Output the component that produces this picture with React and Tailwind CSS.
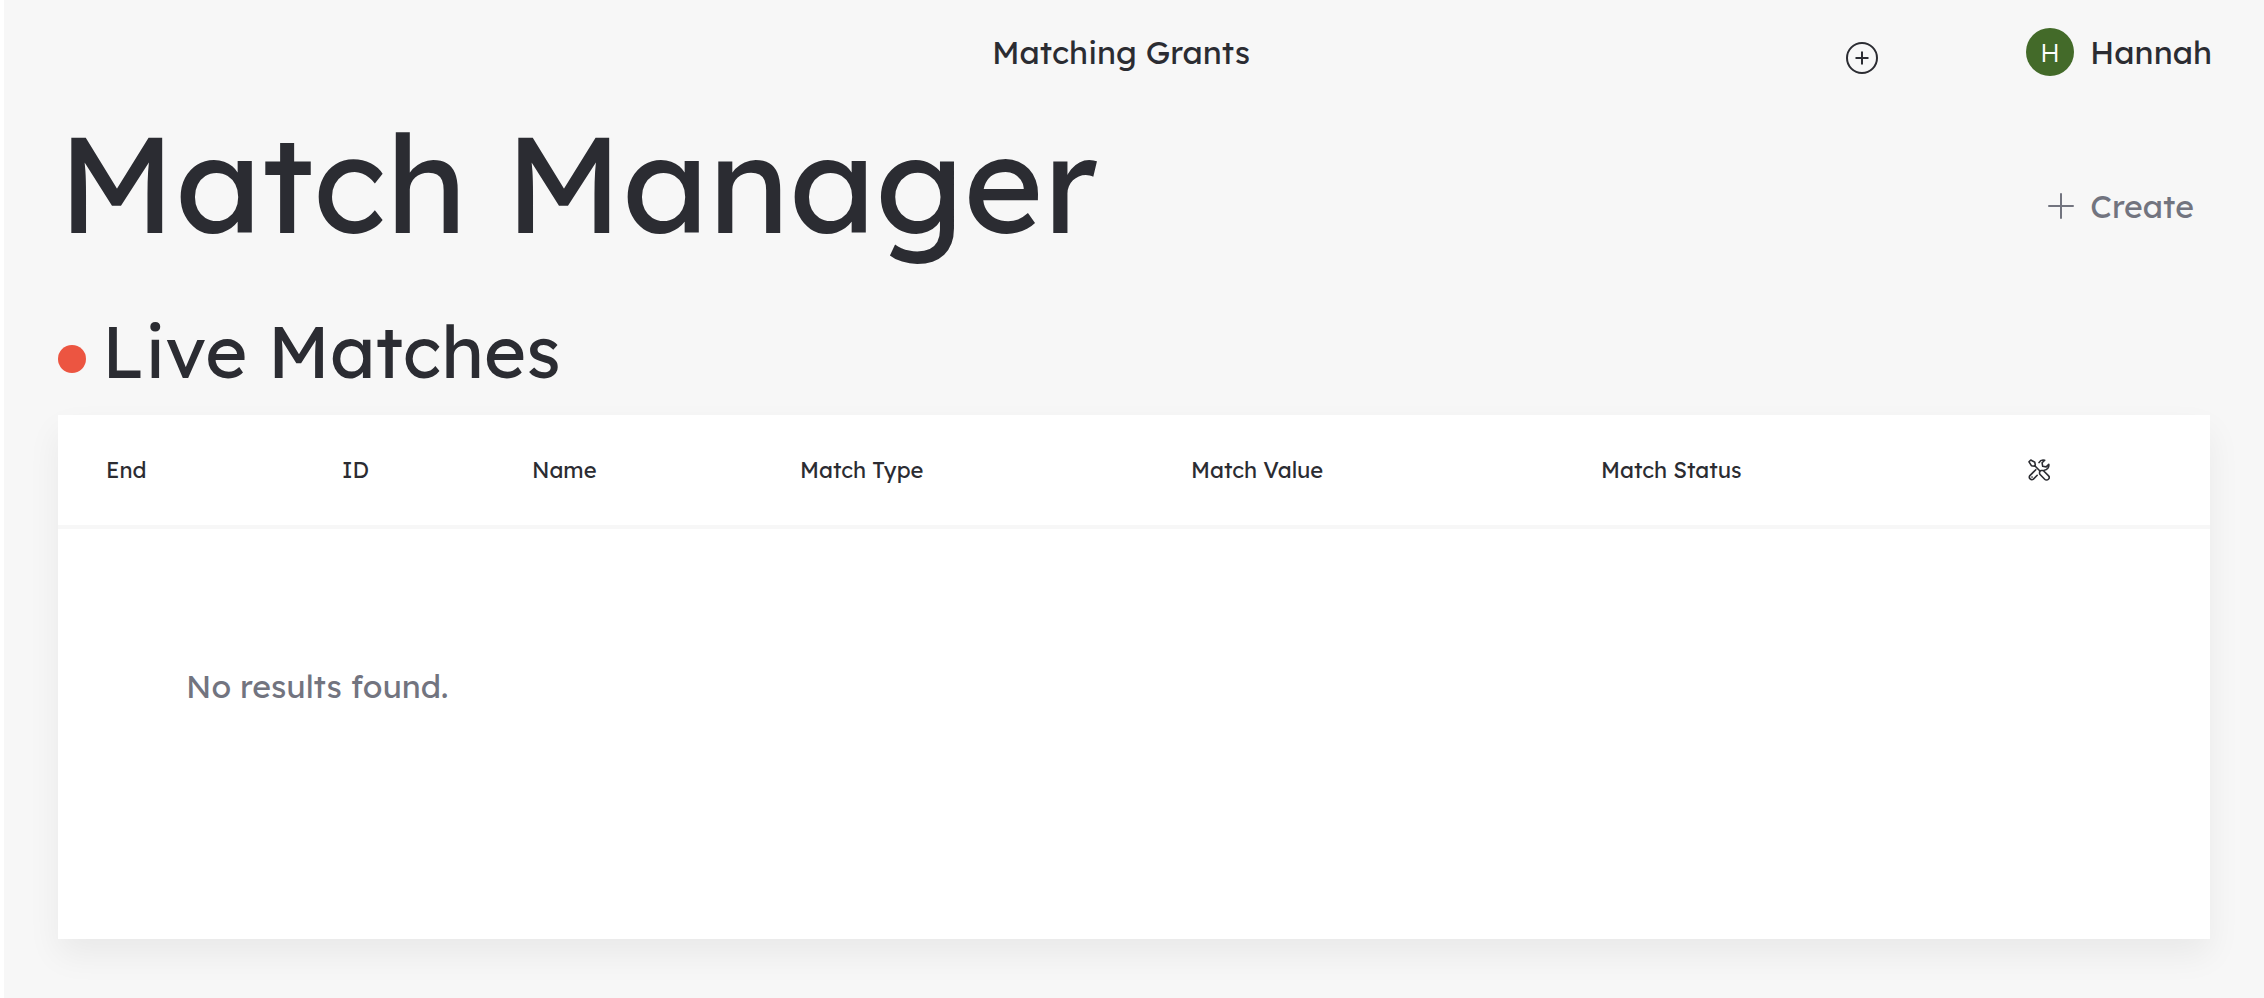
import React, { useState } from "react";

const columns = [
  { label: "End", width: "w-[236px]" },
  { label: "ID", width: "w-[190px]" },
  { label: "Name", width: "w-[268px]" },
  { label: "Match Type", width: "w-[391px]" },
  { label: "Match Value", width: "w-[410px]" },
  { label: "Match Status", width: "w-[427px]" },
];

const PlusCircleIcon = () => (
  <svg
    className="w-8 h-8"
    viewBox="0 0 32 32"
    fill="none"
    stroke="currentColor"
    strokeWidth="2"
    aria-hidden="true"
  >
    <circle cx="16" cy="16" r="15" />
    <path d="M16 9.5v13M9.5 16h13" />
  </svg>
);

const PlusIcon = () => (
  <svg
    className="w-[26px] h-[26px]"
    viewBox="0 0 26 26"
    fill="none"
    stroke="currentColor"
    strokeWidth="2"
    strokeLinecap="round"
    aria-hidden="true"
  >
    <path d="M13 1v24M1 13h24" />
  </svg>
);

const ToolsIcon = () => (
  <svg
    className="w-[22px] h-[22px]"
    viewBox="0 0 22 22"
    fill="none"
    stroke="currentColor"
    strokeWidth="1.6"
    strokeLinecap="round"
    strokeLinejoin="round"
    aria-hidden="true"
  >
    {/* screwdriver */}
    <path d="M2.8 1L1 2.8l2.4 3.9 2.8.5 1.1-1.1-.5-2.8z" />
    <path d="M6.8 6.8l4.9 4.9" />
    <path d="M11.6 15v-2.2l1.3-1.3h2.3l5.2 5.1a2.6 2.6 0 0 1-3.7 3.7z" />
    {/* wrench */}
    <path d="M11 3.6a5 5 0 0 1 5.7-2.4l-2.6 2.6.6 3.5 3.5.6 2.6-2.6a5 5 0 0 1-4.6 5.9" />
    <path d="M7.8 10.7l-5.9 5.9a2.5 2.5 0 0 0 3.5 3.5l3.8-3.8" />
    <path d="M4 18.1h.1" />
  </svg>
);

const MatchManager = () => {
  const [matches] = useState([]);

  return (
    <div className="min-h-screen bg-[#f7f7f7] border-l-4 border-white px-[54px] text-[#2b2c32] font-['Lexend','Inter',sans-serif]">
      {/* Top bar */}
      <header className="grid grid-cols-[1fr_auto_1fr] items-center pt-7 -mr-0.5">
        <div />
        <a href="#" className="pr-7 text-[32px] leading-12">
          Matching Grants
        </a>
        <div className="flex items-center justify-end gap-[148px]">
          <button type="button" aria-label="Add" className="pt-3">
            <PlusCircleIcon />
          </button>
          <button type="button" className="flex items-center gap-4">
            <span className="flex items-center justify-center w-12 h-12 rounded-full bg-[#436a29] text-white text-[26px] font-light">
              H
            </span>
            <span className="text-[32px] leading-12">Hannah</span>
          </button>
        </div>
      </header>

      {/* Page title */}
      <div className="flex items-center justify-between pt-7 pr-4">
        <h1 className="text-[136px] leading-[156px]">Match Manager</h1>
        <button
          type="button"
          className="flex items-center gap-4 pt-12 text-[32px] leading-12 text-[#72747f]"
        >
          <PlusIcon />
          Create
        </button>
      </div>

      {/* Live matches */}
      <section className="pt-[51px]">
        <h2 className="flex items-center gap-4 text-[72px] leading-20">
          <span className="w-7 h-7 mt-4 rounded-full bg-[#ec5541]" />
          Live Matches
        </h2>

        <div className="mt-6 bg-white shadow-[0_16px_32px_rgba(0,0,0,0.06)]">
          <table className="w-full table-fixed border-separate border-spacing-0 text-left">
            <thead>
              <tr>
                {columns.map((column) => (
                  <th
                    key={column.label}
                    className={`${column.width} h-[114px] pl-12 border-b-4 border-[#f7f7f7] text-[22px] font-normal`}
                  >
                    {column.label}
                  </th>
                ))}
                <th
                  aria-label="Tools"
                  className="w-[230px] pl-12 border-b-4 border-[#f7f7f7]"
                >
                  <ToolsIcon />
                </th>
              </tr>
            </thead>
            <tbody>
              {matches.length === 0 && (
                <tr>
                  <td
                    colSpan={7}
                    className="h-[410px] pl-32 pb-24 text-[32px] leading-12 text-[#72747f]"
                  >
                    No results found.
                  </td>
                </tr>
              )}
            </tbody>
          </table>
        </div>
      </section>
    </div>
  );
};

export default MatchManager;
